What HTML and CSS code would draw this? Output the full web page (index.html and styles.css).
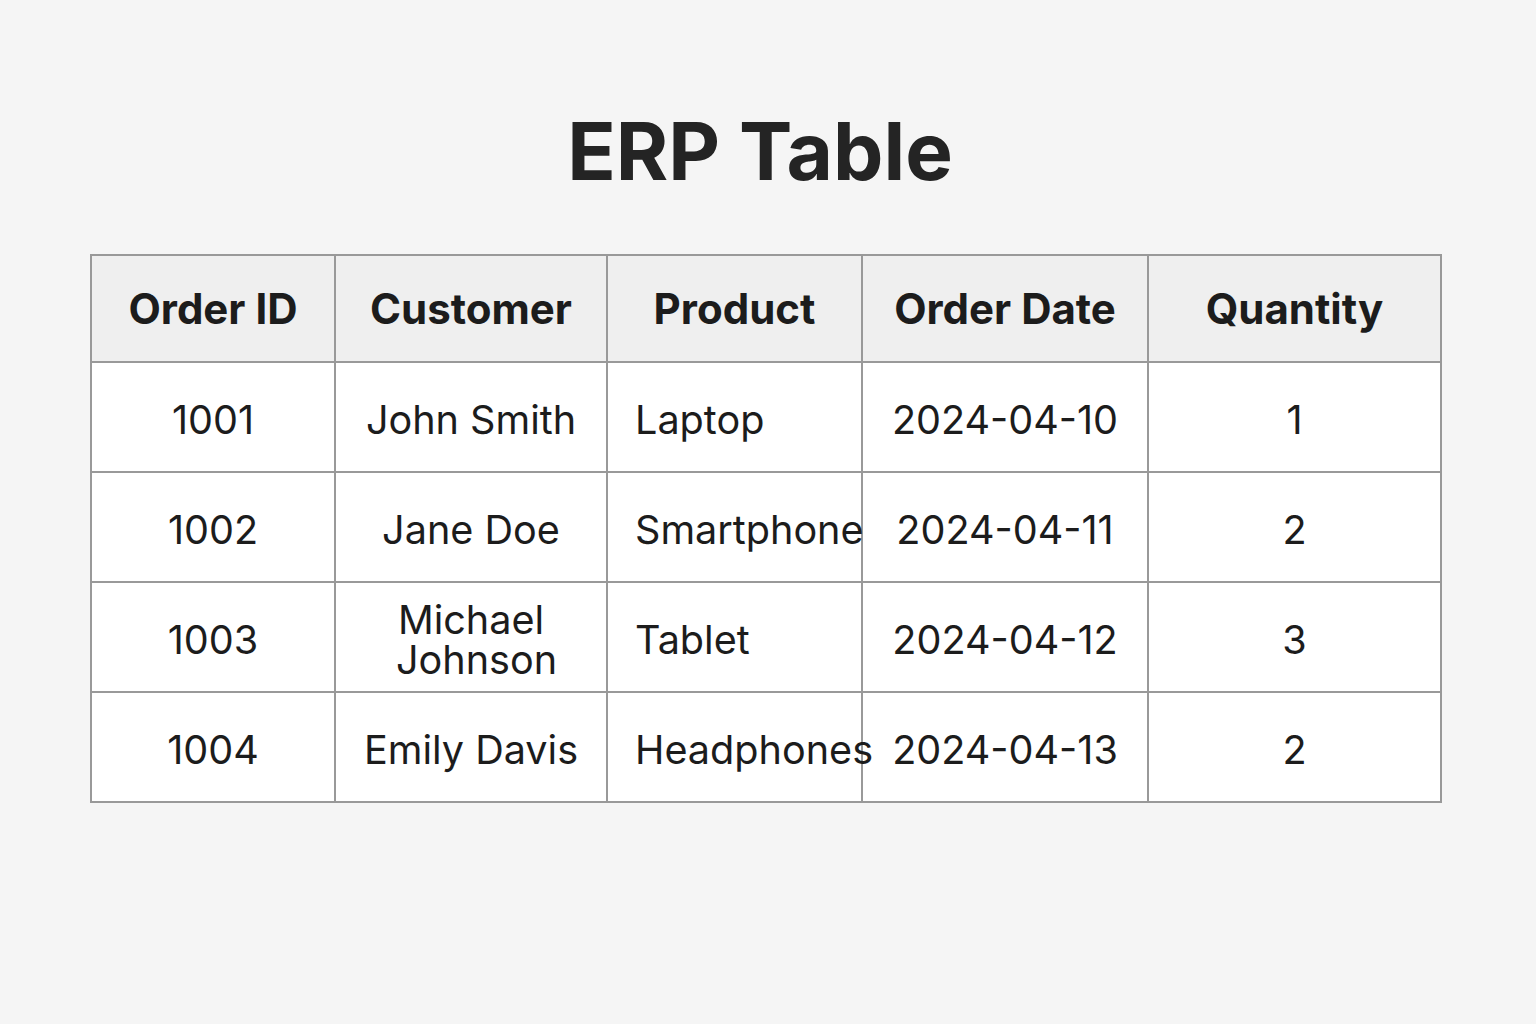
FILE: index.html
```html
<!DOCTYPE html>
<html lang="en">
<head>
<meta charset="utf-8">
<title>ERP Table</title>
<link rel="stylesheet" href="styles.css">
</head>
<body>
<main class="page">
  <h1 class="title">ERP Table</h1>
  <table class="erp">
    <colgroup>
      <col class="c-id"><col class="c-cust"><col class="c-prod"><col class="c-date"><col class="c-qty">
    </colgroup>
    <thead>
      <tr><th>Order ID</th><th>Customer</th><th>Product</th><th>Order Date</th><th>Quantity</th></tr>
    </thead>
    <tbody>
      <tr><td>1001</td><td>John Smith</td><td class="prod">Laptop</td><td>2024-04-10</td><td>1</td></tr>
      <tr><td>1002</td><td>Jane Doe</td><td class="prod">Smartphone</td><td>2024-04-11</td><td>2</td></tr>
      <tr><td>1003</td><td class="wrap">Michael Johnson</td><td class="prod">Tablet</td><td>2024-04-12</td><td>3</td></tr>
      <tr><td>1004</td><td>Emily Davis</td><td class="prod">Headphones</td><td>2024-04-13</td><td>2</td></tr>
    </tbody>
  </table>
</main>
</body>
</html>
```
FILE: styles.css
```css
html, body {
  margin: 0;
  padding: 0;
  background: #f5f5f5;
}
body {
  font-family: Inter, "Noto Sans", "Liberation Sans", sans-serif;
  color: #1c1c1c;
}
.page {
  padding: 103px 0 0 90px;
}
.title {
  margin: 0 0 55px 0;
  width: 1340px;
  text-align: center;
  font-size: 80px;
  line-height: 96px;
  font-weight: 700;
  color: #242424;
}
.erp {
  width: 1350px;
  table-layout: fixed;
  border-collapse: collapse;
  border: 2px solid #999;
  background: #fff;
}
.c-id { width: 244px; }
.c-cust { width: 272px; }
.c-prod { width: 255px; }
.c-date { width: 286px; }
.c-qty { width: 293px; }
.erp th, .erp td {
  border: 2px solid #999;
  text-align: center;
  padding: 0;
  white-space: nowrap;
}
.erp th {
  height: 105px;
  background: #efefef;
  font-size: 42px;
  font-weight: 700;
  color: #1c1c1c;
}
.erp td {
  height: 102px;
  padding-top: 6px;
  font-size: 39.6px;
  font-weight: 400;
  line-height: 40px;
  color: #1c1c1c;
  overflow: visible;
}
.erp td.prod {
  text-align: left;
  padding-left: 27px;
}
.erp td.wrap {
  white-space: normal;
  padding: 6px 60px 0;
}
```
